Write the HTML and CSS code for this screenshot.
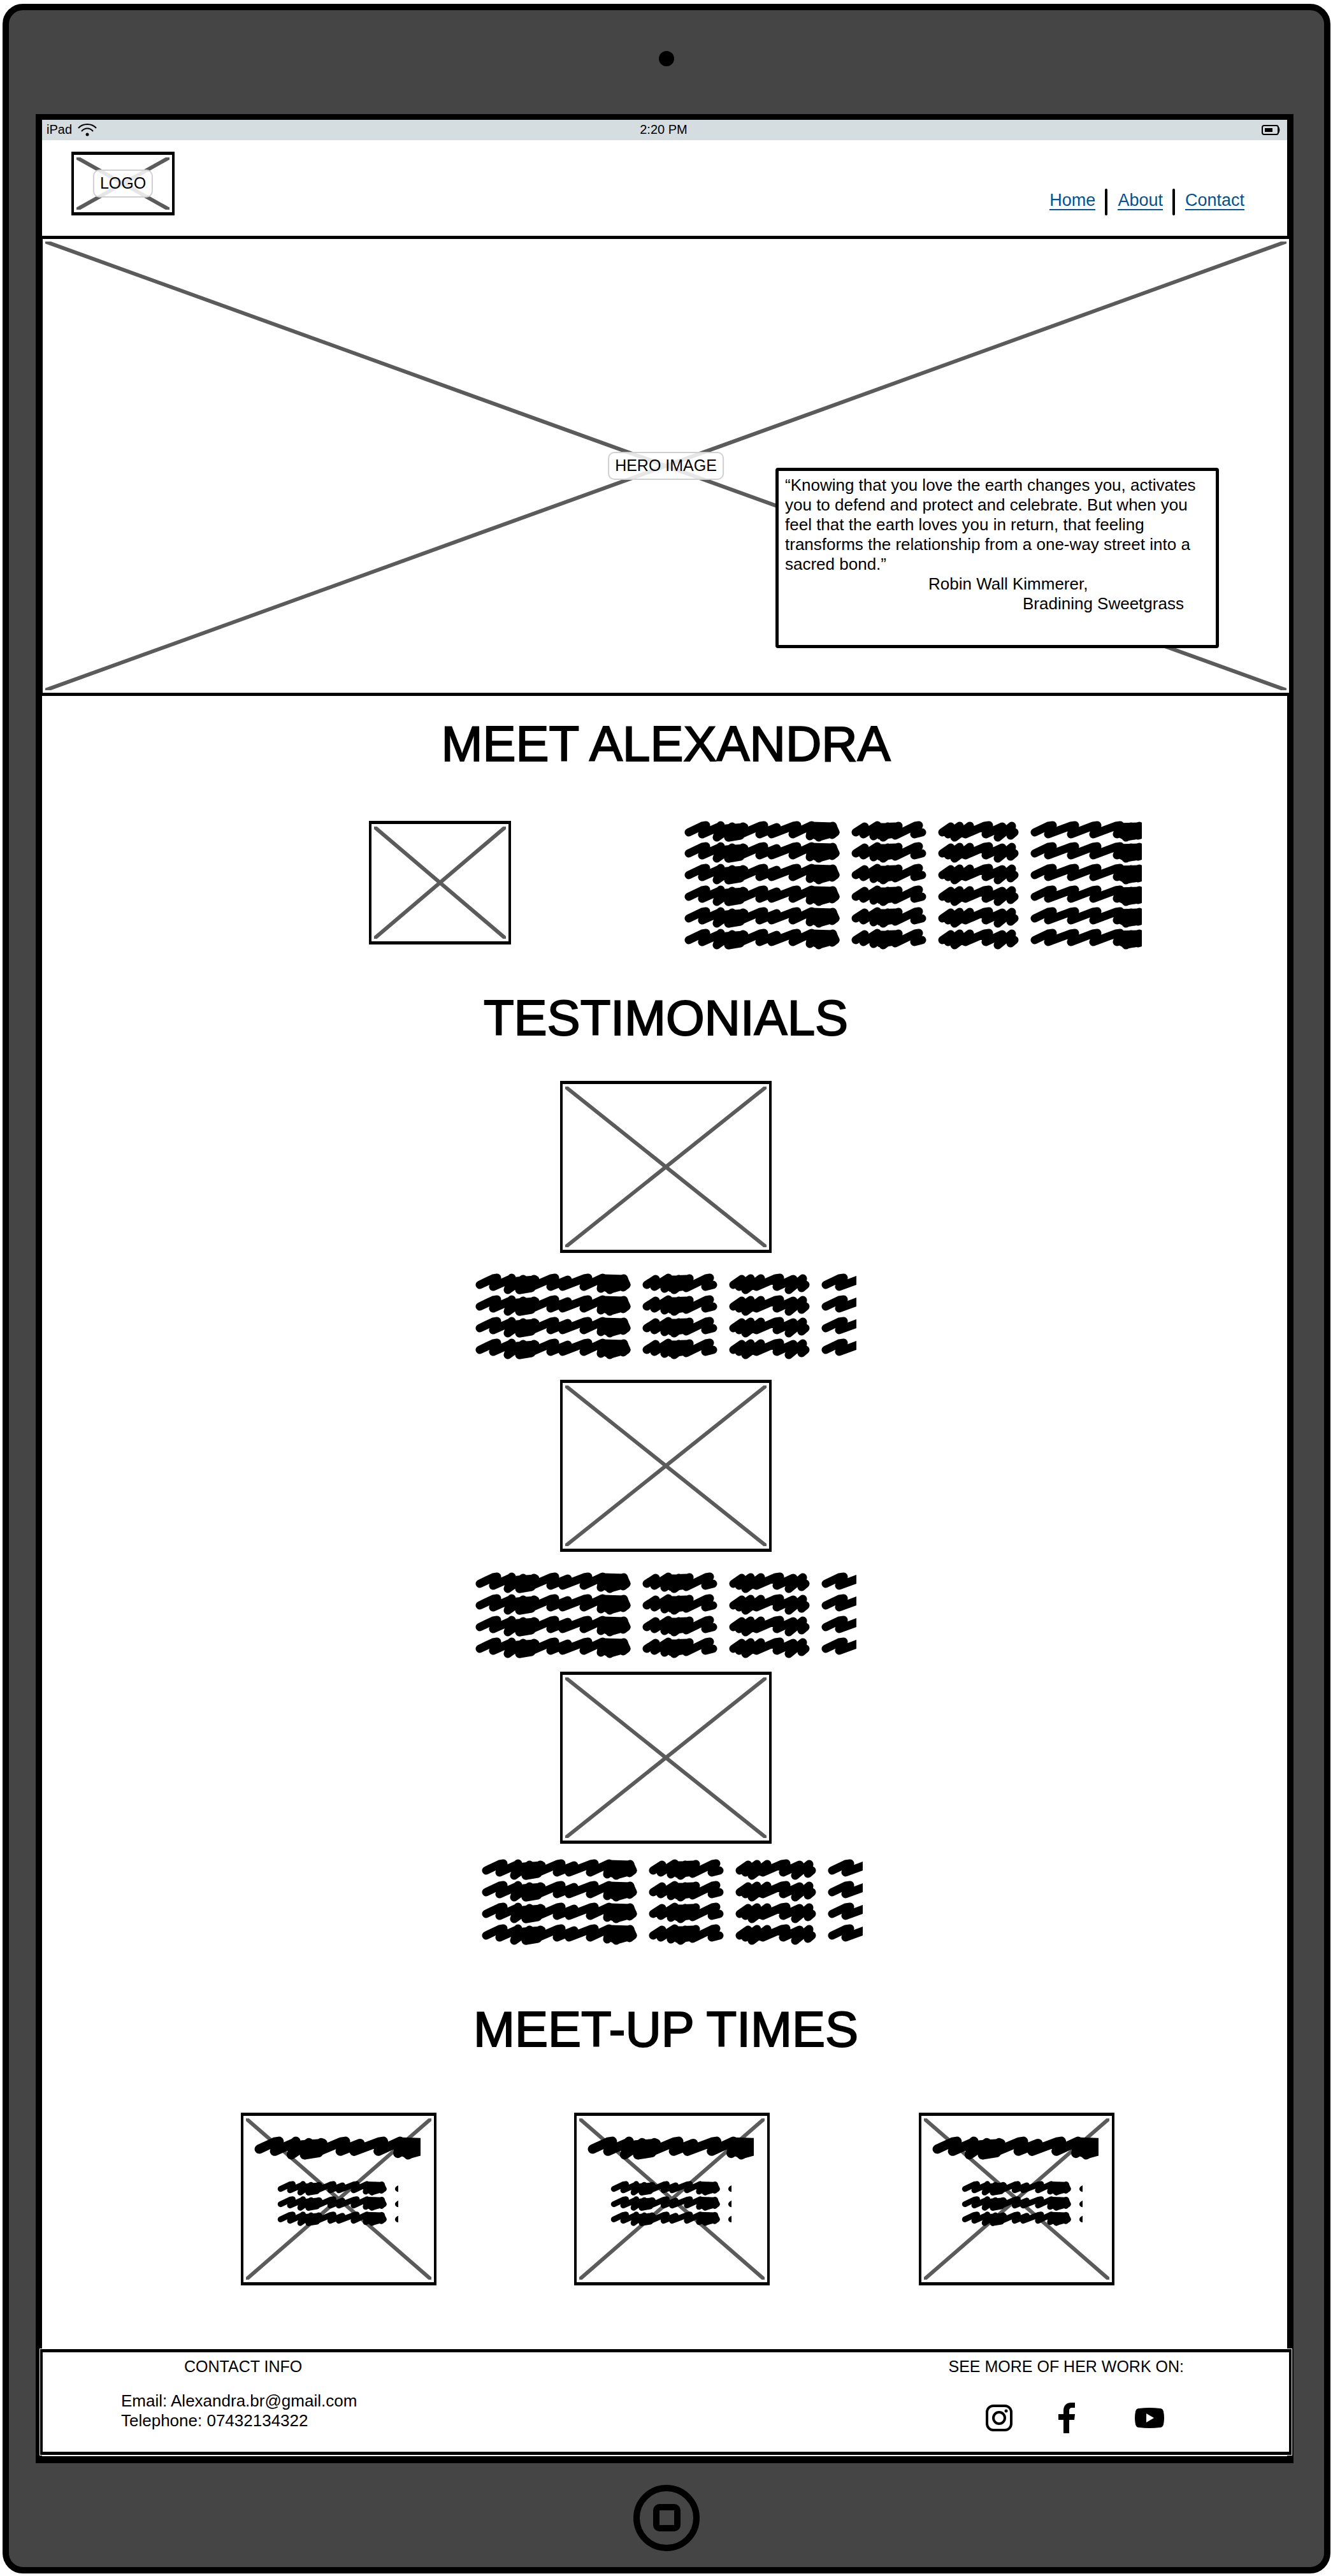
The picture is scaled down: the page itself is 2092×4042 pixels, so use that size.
FILE: index.html
```html
<!DOCTYPE html>
<html lang="en">
<head>
<meta charset="utf-8">
<meta name="viewport" content="width=device-width, initial-scale=1">
<title>Meet Alexandra</title>
<link rel="stylesheet" href="styles.css">
</head>
<body>
<svg class="defs" aria-hidden="true">
  <defs>
    <g id="row" fill="#000" stroke="#000" stroke-width="13" stroke-linecap="round" stroke-linejoin="round">
      <path fill="none" d="M7 18 28 8 34 7 28 21 55 9 57 7 51 26 75 9 69 26 92 9 84 23 119 8 125 7 118 21 145 10 137 21 171 8 177 7 170 21 200 7 197 24 218 9 211 26 233 8 232 22 237 18"/>
      <path d="M31 9 34 11 29 17zM66 12 94 10 88 23 70 26zM120 9 125 11 120 17zM172 9 177 11 172 17zM200 8 233 9 237 18 212 25 200 20z"/>
      <path d="M269 18 283 9 281 21 303 7 297 24 319 9 312 26 336 8 331 23 362 8 368 7 361 21 373 18M303 10 332 9 330 20 308 23z"/>
      <path d="M405 18 418 9 414 21 432 8 424 26 448 8 441 21 471 8 478 7 473 21 499 9 492 26 514 8 512 23 518 18"/>
      <path fill="none" d="M550 18 571 8 578 7 571 21 606 8 613 7 607 21 641 8 648 7 642 21 677 8 684 7 679 21 701 9 693 26 714 8 712 23 730 18"/>
      <path d="M573 10 578 11 573 17zM608 10 613 11 609 17zM643 10 648 11 644 17zM679 10 714 9 712 22 694 25 682 19z"/>
    </g>
  </defs>
</svg>
<div class="device">
  <div class="bezel"><span class="camera"></span></div>
  <div class="screen">
    <div class="status">
      <span class="carrier">iPad
        <svg width="30" height="22" viewBox="0 0 30 22" fill="none" stroke="#000" stroke-width="2" aria-hidden="true"><path d="M1 8C8 0 22 0 29 8M6 13C11 7 19 7 24 13"/><circle cx="15" cy="18" r="2.5" fill="#000" stroke="none"/></svg>
      </span>
      <span>2:20 PM</span>
      <span class="battery">
        <svg width="30" height="18" viewBox="0 0 30 18" aria-hidden="true"><rect x="1" y="2" width="25" height="14" rx="3" fill="none" stroke="#000" stroke-width="2"/><path d="M27 5q2 4 0 8z" stroke="#000"/><rect x="5" y="6" width="12" height="6"/></svg>
      </span>
    </div>
    <header class="top">
      <div class="frame logo">
        <svg class="cross" aria-hidden="true"><line x1="0" y1="0" x2="100%" y2="100%"/><line x1="100%" y1="0" x2="0" y2="100%"/></svg>
        <span class="tag">LOGO</span>
      </div>
      <nav class="nav">
        <a href="#home">Home</a>
        <a href="#about">About</a>
        <a href="#contact">Contact</a>
      </nav>
    </header>
    <section class="frame hero" id="home">
      <svg class="cross" aria-hidden="true"><line x1="0" y1="0" x2="100%" y2="100%"/><line x1="100%" y1="0" x2="0" y2="100%"/></svg>
      <span class="tag">HERO IMAGE</span>
      <blockquote class="quote">
        <p>“Knowing that you love the earth changes you, activates<br>you to defend and protect and celebrate. But when you<br>feel that the earth loves you in return, that feeling<br>transforms the relationship from a one-way street into a<br>sacred bond.”</p>
        <p class="author">Robin Wall Kimmerer,</p>
        <p class="book">Bradining Sweetgrass</p>
      </blockquote>
    </section>
    <main>
      <section class="about" id="about">
        <h2>MEET ALEXANDRA</h2>
        <div class="bio">
          <div class="frame portrait"><svg class="cross" aria-hidden="true"><line x1="0" y1="0" x2="100%" y2="100%"/><line x1="100%" y1="0" x2="0" y2="100%"/></svg></div>
          <svg width="718" height="202" viewBox="0 0 718 202" aria-hidden="true"><use href="#row"/><use href="#row" y="33"/><use href="#row" y="67"/><use href="#row" y="101"/><use href="#row" y="135"/><use href="#row" y="169"/></svg>
        </div>
      </section>
      <section class="testimonials">
        <h2>TESTIMONIALS</h2>
        <div class="story">
          <div class="frame photo"><svg class="cross" aria-hidden="true"><line x1="0" y1="0" x2="100%" y2="100%"/><line x1="100%" y1="0" x2="0" y2="100%"/></svg></div>
          <svg width="598" height="136" viewBox="0 0 598 136" aria-hidden="true"><use href="#row"/><use href="#row" y="34"/><use href="#row" y="68"/><use href="#row" y="102"/></svg>
        </div>
        <div class="story">
          <div class="frame photo"><svg class="cross" aria-hidden="true"><line x1="0" y1="0" x2="100%" y2="100%"/><line x1="100%" y1="0" x2="0" y2="100%"/></svg></div>
          <svg width="598" height="136" viewBox="0 0 598 136" aria-hidden="true"><use href="#row"/><use href="#row" y="34"/><use href="#row" y="68"/><use href="#row" y="102"/></svg>
        </div>
        <div class="story last">
          <div class="frame photo"><svg class="cross" aria-hidden="true"><line x1="0" y1="0" x2="100%" y2="100%"/><line x1="100%" y1="0" x2="0" y2="100%"/></svg></div>
          <svg width="598" height="136" viewBox="0 0 598 136" aria-hidden="true"><use href="#row"/><use href="#row" y="34"/><use href="#row" y="68"/><use href="#row" y="102"/></svg>
        </div>
      </section>
      <section class="meetups">
        <h2>MEET-UP TIMES</h2>
        <div class="cards">
          <div class="frame card">
            <svg class="cross" aria-hidden="true"><line x1="0" y1="0" x2="100%" y2="100%"/><line x1="100%" y1="0" x2="0" y2="100%"/></svg>
            <svg class="title" width="261" height="37" viewBox="0 0 228 33" preserveAspectRatio="none" aria-hidden="true"><use href="#row"/></svg>
            <svg class="lines" width="190" height="71" viewBox="0 0 269 101" aria-hidden="true"><use href="#row"/><use href="#row" y="34"/><use href="#row" y="68"/></svg>
          </div>
          <div class="frame card">
            <svg class="cross" aria-hidden="true"><line x1="0" y1="0" x2="100%" y2="100%"/><line x1="100%" y1="0" x2="0" y2="100%"/></svg>
            <svg class="title" width="261" height="37" viewBox="0 0 228 33" preserveAspectRatio="none" aria-hidden="true"><use href="#row"/></svg>
            <svg class="lines" width="190" height="71" viewBox="0 0 269 101" aria-hidden="true"><use href="#row"/><use href="#row" y="34"/><use href="#row" y="68"/></svg>
          </div>
          <div class="frame card wide">
            <svg class="cross" aria-hidden="true"><line x1="0" y1="0" x2="100%" y2="100%"/><line x1="100%" y1="0" x2="0" y2="100%"/></svg>
            <svg class="title" width="261" height="37" viewBox="0 0 228 33" preserveAspectRatio="none" aria-hidden="true"><use href="#row"/></svg>
            <svg class="lines" width="190" height="71" viewBox="0 0 269 101" aria-hidden="true"><use href="#row"/><use href="#row" y="34"/><use href="#row" y="68"/></svg>
          </div>
        </div>
      </section>
    </main>
    <footer class="frame foot" id="contact">
      <div class="contact">
        <h3>CONTACT INFO</h3>
        <p>Email: Alexandra.br@gmail.com<br>Telephone: 07432134322</p>
      </div>
      <div class="social">
        <h3>SEE MORE OF HER WORK ON:</h3>
        <div class="icons">
          <a href="#instagram" aria-label="Instagram"><svg width="42" height="42" viewBox="0 0 42 42" fill="none" stroke="#000" stroke-width="4"><rect x="2" y="2" width="38" height="38" rx="10"/><circle cx="21" cy="21" r="9"/><circle cx="32" cy="10" r="2.5" fill="#000" stroke="none"/></svg></a>
          <a href="#facebook" aria-label="Facebook"><svg width="26" height="48" viewBox="0 0 26 48"><path d="M8 48V27H0V18H8V13C8 4 13 0 20 0H26V8H22C18 8 17 10 17 13V18H26L25 27H17V48Z"/></svg></a>
          <a href="#youtube" aria-label="YouTube"><svg width="46" height="32" viewBox="0 0 46 32"><path fill-rule="evenodd" d="M7 1Q23-1 39 1Q44 1 45 6Q47 16 45 26Q44 31 39 31Q23 33 7 31Q2 31 1 26Q-1 16 1 6Q2 1 7 1ZM18 9V23L30 16Z"/></svg></a>
        </div>
      </div>
    </footer>
  </div>
  <div class="bezel bottom">
    <button class="home" type="button" aria-label="Home button"><span></span></button>
  </div>
</div>
</body>
</html>
```
FILE: styles.css
```css
* {
  box-sizing: border-box;
}

body {
  margin: 0;
  padding: 6px 4px 4px;
  background: #fff;
  color: #000;
  font: 26px/31px "Liberation Sans", Arial, sans-serif;
}

h2,
h3,
p {
  margin: 0;
  font-weight: normal;
}

svg {
  display: block;
  flex: none;
}

.defs {
  position: absolute;
  width: 0;
  height: 0;
}

.device {
  padding: 0 48px 0 42px;
  border: 10px solid #000;
  border-radius: 32px;
  background: #454545;
}

.bezel {
  display: flex;
  align-items: center;
  justify-content: center;
  height: 163px;
  padding-left: 6px;
}

.bottom {
  padding-top: 8px;
}

.camera {
  width: 24px;
  height: 24px;
  margin-bottom: 12px;
  border-radius: 50%;
  background: #000;
}

.home {
  display: flex;
  align-items: center;
  justify-content: center;
  width: 104px;
  height: 104px;
  padding: 0;
  border: 10px solid #000;
  border-radius: 50%;
  background: none;
}

.home span {
  width: 43px;
  height: 43px;
  border: 10px solid #000;
  border-radius: 10px;
}

.screen {
  border: solid #000;
  border-width: 9px 10px 11px;
  background: #fff;
}

.status {
  display: grid;
  grid-template-columns: 1fr auto 1fr;
  align-items: center;
  height: 32px;
  padding: 0 10px 3px 7px;
  background: #d6dde0;
  font-size: 20px;
}

.carrier {
  display: flex;
  align-items: center;
  gap: 9px;
}

.battery {
  justify-self: end;
}

.top {
  display: flex;
  align-items: flex-start;
  justify-content: space-between;
  min-height: 150px;
  padding: 18px 67px 0 46px;
}

.frame {
  position: relative;
  padding: 4px;
  border: solid #000;
  border-width: 5px 4px;
  background: #fff;
}

.cross {
  width: 100%;
  height: 100%;
  stroke: #5b5b5b;
  stroke-width: 6px;
}

.tag {
  position: absolute;
  top: 50%;
  left: 50%;
  transform: translate(-50%, -50%);
  padding: 4px 9px 5px;
  border: 2px solid #d0d0d0;
  border-radius: 10px;
  background: rgba(255, 255, 255, 0.85);
  font-size: 25px;
  white-space: nowrap;
}

.logo {
  width: 162px;
  height: 100px;
}

.nav {
  display: flex;
  padding-top: 61px;
}

.nav a {
  height: 31px;
  color: #04528f;
  font-size: 27px;
  text-decoration: none;
  border-bottom: 2px solid #04528f;
}

.nav a + a::before {
  content: "";
  position: absolute;
  width: 4px;
  height: 42px;
  margin: -3px 0 0 -20px;
  border-radius: 2px;
  background: #000;
}

.nav a + a {
  margin-left: 35px;
}

.hero {
  height: 722px;
  margin: 0 -7px 0 -3px;
}

.quote {
  position: absolute;
  top: 359px;
  right: 110px;
  width: 696px;
  margin: 0;
  padding: 7px 10px 49px;
  border: 5px solid #000;
  border-radius: 4px;
  background: #fff;
  white-space: nowrap;
}

.author {
  padding-left: 225px;
}

.book {
  padding-left: 373px;
}

main {
  padding: 30px 0 100px 4px;
}

h2 {
  font-size: 78px;
  line-height: 90px;
  text-align: center;
  -webkit-text-stroke: 2px #000;
}

.bio {
  display: flex;
  align-items: flex-start;
  justify-content: center;
  gap: 272px;
  margin: 76px 0 62px;
  padding-left: 281px;
}

.portrait {
  width: 223px;
  height: 194px;
}

.testimonials h2 {
  margin-bottom: 54px;
}

.story {
  display: flex;
  flex-direction: column;
  align-items: center;
  gap: 32px;
  margin-bottom: 31px;
}

.story + .story {
  margin-bottom: 20px;
}

.story + .last {
  gap: 24px;
  margin-bottom: 86px;
}

.last > svg {
  margin-left: 20px;
}

.photo {
  width: 332px;
  height: 270px;
}

.cards {
  display: flex;
  justify-content: center;
  gap: 216px;
  margin-top: 86px;
  padding-left: 36px;
}

.card {
  width: 307px;
  height: 271px;
}

.wide {
  margin-left: 18px;
}

.card .title,
.card .lines {
  position: absolute;
  left: 17px;
  top: 32px;
}

.card .lines {
  left: 53px;
  top: 102px;
}

.wide .lines {
  left: 63px;
}

.foot {
  display: flex;
  justify-content: space-between;
  min-height: 166px;
  margin: 0 -7px 2px -3px;
  padding: 7px 165px 0 123px;
  outline: 1px solid #fff;
}

h3 {
  font-size: 25px;
}

.contact h3 {
  margin-bottom: 23px;
  padding-left: 99px;
}

.icons {
  display: flex;
  align-items: center;
  margin-top: 41px;
  padding-left: 58px;
}

.icons a + a {
  margin-left: 72px;
}

.icons a + a + a {
  margin-left: 94px;
}
```
